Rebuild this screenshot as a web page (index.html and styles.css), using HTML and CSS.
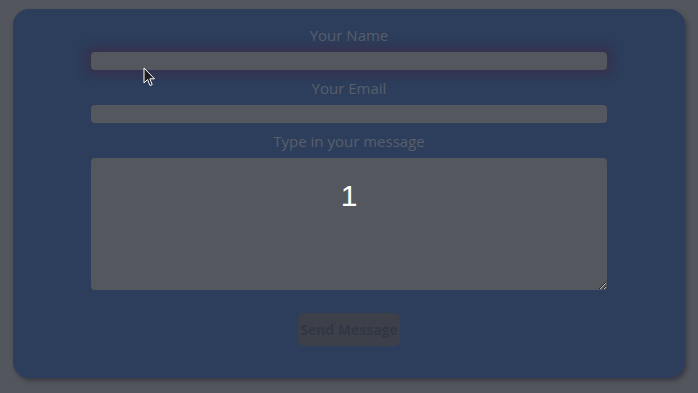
FILE: index.html
```html
<!DOCTYPE html>
<html>
<head>
<meta charset="utf-8">
<link rel="stylesheet" href="styles.css">
</head>
<body>
<div class="card">
  <form class="form">
    <label class="label">Your Name</label>
    <input class="field focused" type="text">
    <label class="label">Your Email</label>
    <input class="field" type="text">
    <label class="label">Type in your message</label>
    <textarea class="area">1</textarea>
    <button class="btn" type="button">Send Message</button>
  </form>
</div>
<svg class="cursor" width="13" height="20" viewBox="0 0 13 20">
  <path d="M1 1 L1 16 L4.5 12.5 L7 18.5 L9.2 17.6 L6.8 11.8 L11.5 11.8 Z" fill="#1e1e22" stroke="#ffffff" stroke-width="1"/>
</svg>
</body>
</html>
```
FILE: styles.css
```css
html, body {
  margin: 0;
  padding: 0;
  background: #54565d;
  width: 698px;
  height: 393px;
  overflow: hidden;
}
.card {
  margin: 9px 13px 0 13px;
  width: 672px;
  height: 369px;
  box-sizing: border-box;
  background: #2c3e5b;
  border-radius: 16px;
  box-shadow: 2px 3px 4px rgba(40, 42, 48, 0.6);
  padding-top: 16px;
}
.form {
  display: flex;
  flex-direction: column;
  align-items: center;
}
.label {
  font-family: "Open Sans", "Noto Sans", sans-serif;
  font-size: 15px;
  line-height: 20px;
  height: 20px;
  color: #595f6b;
}
.field {
  display: block;
  box-sizing: border-box;
  width: 516px;
  height: 18px;
  margin: 7px 0 8px 0;
  border: none;
  border-radius: 4px;
  background: #55575e;
  outline: none;
  padding: 0;
}
.focused {
  box-shadow: 0 0 8px 6px rgba(56, 48, 78, 0.8);
}
.area {
  display: block;
  box-sizing: border-box;
  width: 516px;
  height: 132px;
  margin-top: 7px;
  border: none;
  border-radius: 4px;
  background: #55575e;
  color: #ffffff;
  font-family: "Liberation Sans", Arial, sans-serif;
  font-size: 30px;
  text-align: center;
  padding: 21px 0 0 0;
  resize: both;
  outline: none;
}
.btn {
  margin-top: 23px;
  width: 102px;
  height: 33px;
  border: none;
  border-radius: 6px;
  background: #3d4049;
  color: #2f3746;
  font-family: "Open Sans", "Noto Sans", sans-serif;
  font-weight: 700;
  font-size: 14px;
  padding: 0;
}
.cursor {
  position: absolute;
  left: 143px;
  top: 67px;
}
```
